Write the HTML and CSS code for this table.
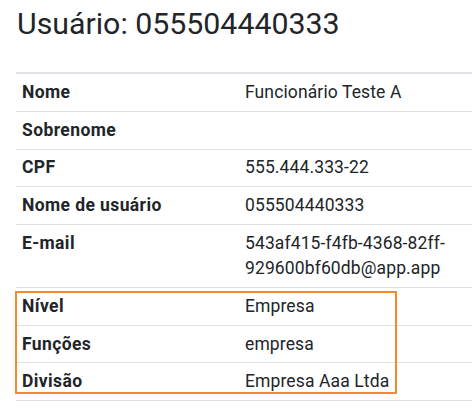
FILE: index.html
```html
<!DOCTYPE html>
<html lang="pt-BR">
<head>
<meta charset="utf-8">
<title>Usuário</title>
<link rel="stylesheet" href="styles.css">
</head>
<body>
<div class="page">
  <h1 class="title">Usuário: 055504440333</h1>
  <div class="table-wrap">
    <table class="details">
      <tbody>
        <tr><th>Nome</th><td>Funcionário Teste A</td></tr>
        <tr><th>Sobrenome</th><td></td></tr>
        <tr><th>CPF</th><td>555.444.333-22</td></tr>
        <tr><th>Nome de usuário</th><td>055504440333</td></tr>
        <tr><th>E-mail</th><td>543af415-f4fb-4368-82ff-<br>929600bf60db@app.app</td></tr>
        <tr><th>Nível</th><td>Empresa</td></tr>
        <tr><th>Funções</th><td>empresa</td></tr>
        <tr><th>Divisão</th><td>Empresa Aaa Ltda</td></tr>
      </tbody>
    </table>
    <div class="highlight"></div>
  </div>
</div>
</body>
</html>
```
FILE: styles.css
```css
html, body {
  margin: 0;
  padding: 0;
  background: #ffffff;
  overflow: hidden;
}
body {
  font-family: Roboto, "Liberation Sans", sans-serif;
  color: #212529;
}
.page {
  padding: 0 0 0 16px;
}
.title {
  font-size: 30.3px;
  font-weight: 400;
  line-height: 36px;
  margin: 6px 0 0 1px;
  height: 66px;
}
.table-wrap {
  position: relative;
}
.details {
  width: 100%;
  border-collapse: collapse;
  border-top: 2px solid #dee2e6;
  font-size: 17.5px;
  line-height: 25px;
}
.details th,
.details td {
  text-align: left;
  vertical-align: top;
  padding: 5.9px 6px;
  border-bottom: 1px solid #dee2e6;
}
.details td {
  letter-spacing: 0.12px;
}
.details th {
  width: 211px;
  font-weight: 700;
  letter-spacing: 0.4px;
}
.highlight {
  position: absolute;
  left: -1px;
  top: 219px;
  width: 378px;
  height: 99px;
  border: 2px solid #f58a2c;
}
```
